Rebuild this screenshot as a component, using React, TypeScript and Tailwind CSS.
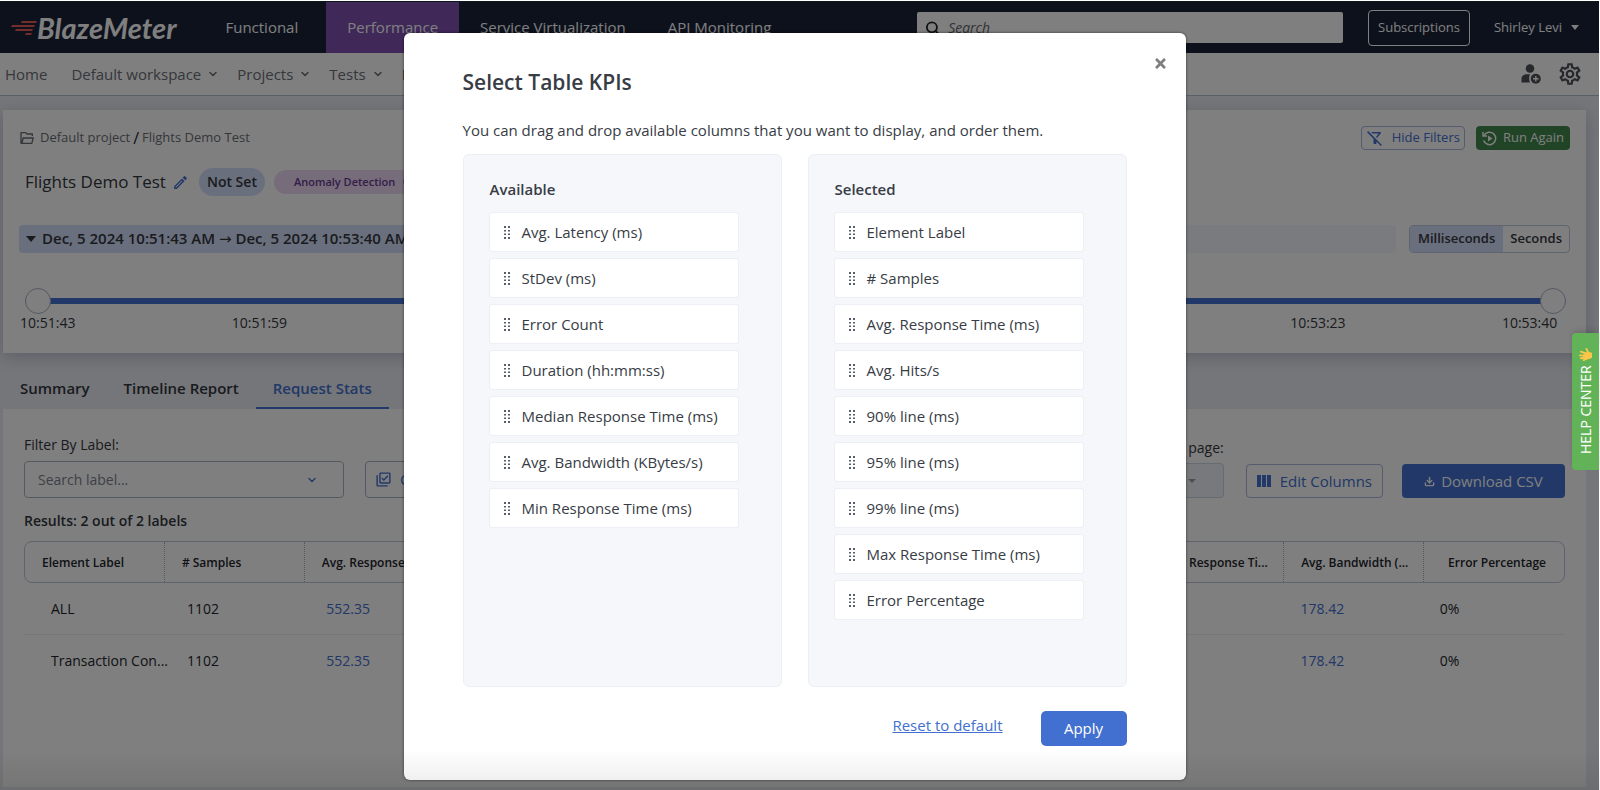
import { useState } from "react";
import { ChevronDown, Info, Search } from "lucide-react";
import { FaTimes } from "react-icons/fa";
import { FiDownload } from "react-icons/fi";
import {
  MdOutlineFilterAltOff,
  MdOutlineLibraryAddCheck,
  MdOutlineModeEdit,
  MdOutlineSettings,
} from "react-icons/md";
import { RiFolderOpenLine } from "react-icons/ri";

const PRODUCTS = [
  "Functional",
  "Performance",
  "Service Virtualization",
  "API Monitoring",
];

const MENUS = ["Default workspace", "Projects", "Tests", "Reports"];

// empty ticks keep the spacing of the scale
const TICKS = ["10:51:43", "10:51:59", "", "", "", "", "10:53:23", "10:53:40"];

const TABS = ["Summary", "Timeline Report", "Request Stats"];

const HEADERS = [
  "Element Label",
  "# Samples",
  "Avg. Response ...",
  "",
  "",
  "",
  "",
  "",
  "Max Response Ti...",
  "Avg. Bandwidth (...",
  "Error Percentage",
];

const ROWS = [
  ["ALL", "1102", "552.35", "", "", "", "", "", "", "178.42", "0%"],
  ["Transaction Con...", "1102", "552.35", "", "", "", "", "", "", "178.42", "0%"],
];

const AVAILABLE = [
  "Avg. Latency (ms)",
  "StDev (ms)",
  "Error Count",
  "Duration (hh:mm:ss)",
  "Median Response Time (ms)",
  "Avg. Bandwidth (KBytes/s)",
  "Min Response Time (ms)",
];

const SELECTED = [
  "Element Label",
  "# Samples",
  "Avg. Response Time (ms)",
  "Avg. Hits/s",
  "90% line (ms)",
  "95% line (ms)",
  "99% line (ms)",
  "Max Response Time (ms)",
  "Error Percentage",
];

function Logo() {
  return (
    <a href="#" className="flex items-center pl-[11px]">
      <svg width="26" height="16" viewBox="0 0 26 16" fill="#e65a54" aria-hidden="true">
        <path d="M11 1h15l-1 2H10zM1 5h23l-1 2H0zM5 9h17l-1 2H4zM15 13h6l-1 2h-6z" />
      </svg>
      <span className="font-[Lato] text-[29px] leading-8 font-bold text-white italic">
        BlazeMeter
      </span>
    </a>
  );
}

function TopBar() {
  return (
    <header className="flex h-[52px] items-center border-t border-[#14302f] bg-[#1a2238] text-white">
      <Logo />
      <nav className="ml-7 flex h-full shrink-0">
        {PRODUCTS.map((name) => (
          <a
            key={name}
            href="#"
            className={`flex h-full items-center px-[21px] text-[15px] ${
              name === "Performance" ? "ml-[7px] bg-[#8050b2]" : ""
            }`}
          >
            {name}
          </a>
        ))}
      </nav>
      <div className="ml-auto flex items-center">
        <label className="flex h-[31px] w-[426px] items-center gap-2 rounded-xs bg-white px-2 text-[#22252b]">
          <Search size={16} strokeWidth={3} />
          <input
            type="text"
            placeholder="Search"
            aria-label="Search"
            className="w-full text-sm italic placeholder:text-[#63666d]"
          />
        </label>
        <button className="ml-[25px] h-9 rounded-sm border border-white px-[9px] text-[13px]">
          Subscriptions
        </button>
        <button className="ml-6 flex items-center gap-[9px] pr-5 text-[13px]">
          Shirley Levi
          <svg width="8" height="5" viewBox="0 0 8 5" fill="currentColor">
            <path d="M0 0h8L4 5z" />
          </svg>
        </button>
      </div>
    </header>
  );
}

function InviteIcon() {
  return (
    <svg width="20" height="20" viewBox="0 0 20 20" fill="currentColor">
      <circle cx="9" cy="4.500" r="4.300" />
      <path d="M.5 18.500V15c0-3 2-4.800 5-4.800h3.500c-1.200 2.500-1.200 5.500 0 8.300z" />
      <circle cx="14.800" cy="14.800" r="5" />
      <path d="M14.100 12h1.400v2.100h2.100v1.400h-2.100v2.100h-1.400v-2.100H12v-1.400h2.100z" fill="#fff" />
    </svg>
  );
}

function MenuBar() {
  return (
    <div className="flex h-[43px] items-center border-b border-[#b4c0d6] bg-white text-[15px] text-[#6b6e75]">
      <a href="#" className="mr-6 pl-[5px]">
        Home
      </a>
      {MENUS.map((name) => (
        <button key={name} className="mr-[18px] flex items-center gap-1.5">
          {name}
          <ChevronDown size={12} strokeWidth={3} />
        </button>
      ))}
      <div className="ml-auto flex items-center gap-4 pr-4 text-[#4d5058]">
        <button aria-label="Invite user">
          <InviteIcon />
        </button>
        <button aria-label="Settings">
          <MdOutlineSettings size={26} />
        </button>
      </div>
    </div>
  );
}

function RerunIcon() {
  return (
    <svg width="15" height="15" viewBox="0 0 15 15" fill="none" stroke="currentColor" strokeWidth="1.500">
      <path d="M2 4.500A6.200 6.200 0 1 1 1.600 9.500" />
      <path d="M1 1v4h4" />
      <path d="M6 4.500v6l4.500-3z" fill="currentColor" stroke="none" />
    </svg>
  );
}

const RANGE_CLASS =
  "pointer-events-none absolute inset-0 h-[26px] w-full appearance-none bg-transparent [&::-webkit-slider-thumb]:h-[26px] [&::-webkit-slider-thumb]:w-[26px] [&::-webkit-slider-thumb]:appearance-none [&::-webkit-slider-thumb]:rounded-full [&::-webkit-slider-thumb]:border [&::-webkit-slider-thumb]:border-[#a9b3c6] [&::-webkit-slider-thumb]:bg-white [&::-webkit-slider-thumb]:pointer-events-auto";

function TimeRange() {
  return (
    <div className="mt-[35px] pr-1 pl-1.5">
      <div className="relative flex h-[26px] items-center">
        <div className="h-1.5 w-full rounded-full bg-[#4270d0]" />
        <input type="range" min={0} max={117} defaultValue={0} aria-label="From" className={RANGE_CLASS} />
        <input type="range" min={0} max={117} defaultValue={117} aria-label="To" className={RANGE_CLASS} />
      </div>
    </div>
  );
}

function ReportHeader() {
  const [unit, setUnit] = useState("Milliseconds");

  return (
    <section className="mt-3.5 bg-white px-4 pt-4 pb-[21px] text-[#33363d] shadow-[0_4px_16px_rgba(60,70,110,0.28)]">
      <div className="flex h-6 items-center text-[13px] text-[#6b6e75]">
        <RiFolderOpenLine size={16} className="mr-[5px]" />
        <a href="#">Default project</a>
        <span className="mx-[3px] text-base text-[#22252b]">/</span>
        <a href="#">Flights Demo Test</a>
        <button className="ml-auto flex h-6 items-center gap-2 rounded border border-[#a9b8dc] px-1 text-[#4270d0]">
          <MdOutlineFilterAltOff size={18} />
          Hide Filters
        </button>
        <button className="ml-[11px] flex h-6 items-center gap-1.5 rounded bg-[#43894e] px-1.5 text-white">
          <RerunIcon />
          Run Again
        </button>
      </div>
      <div className="mt-[18px] flex items-center pl-1.5">
        <h1 className="text-[17px] leading-7">Flights Demo Test</h1>
        <button aria-label="Rename test" className="ml-1.5 text-[#4270d0]">
          <MdOutlineModeEdit size={17} />
        </button>
        <span className="ml-2.5 rounded-full bg-[#d3dff9] px-2 text-sm leading-7 font-semibold">
          Not Set
        </span>
        <span className="ml-[9px] flex h-6 items-center gap-2 rounded-full bg-[#ecd9f5] px-5 text-[11px] font-semibold text-[#693b92]">
          Anomaly Detection
          <Info size={14} className="text-[#22252b]" />
        </span>
      </div>
      <div className="mt-[29px] flex h-7 items-stretch gap-[13px] font-semibold">
        <div className="flex flex-1 rounded bg-[#f3f6fc]">
          <button className="flex items-center gap-1.5 rounded bg-[#d3dff9] px-[7px] text-[15px]">
            <svg width="10" height="6" viewBox="0 0 10 6" fill="currentColor">
              <path d="M0 0h10L5 6z" />
            </svg>
            <span>
              Dec, 5 2024 10:51:43 AM{" "}
              <span className="font-['DejaVu_Sans'] font-normal">→</span> Dec, 5 2024 10:53:40 AM
            </span>
          </button>
        </div>
        <div className="flex rounded border border-[#bcc8e0] text-[13px]">
          {["Milliseconds", "Seconds"].map((name) => (
            <button
              key={name}
              onClick={() => setUnit(name)}
              className={unit === name ? "bg-[#d3dff9] px-2" : "px-[7px]"}
            >
              {name}
            </button>
          ))}
        </div>
      </div>
      <TimeRange />
      <div className="flex justify-between pr-[13px] pl-px text-sm leading-[18px]">
        {TICKS.map((tick, i) => (
          <span key={i} className="w-[55px]">
            {tick}
          </span>
        ))}
      </div>
    </section>
  );
}

function StatsTable() {
  return (
    <table className="mt-2.5 block w-full text-left text-sm text-[#22252b]">
      <thead className="block rounded-lg border border-[#bcc6dc]">
        <tr className="grid h-10 grid-cols-11 items-stretch text-xs">
          {HEADERS.map((name, i) => (
            <th
              key={i}
              className="flex items-center overflow-hidden border-r border-dotted border-[#a9b3c6] pt-0.5 pl-[17px] font-semibold whitespace-nowrap last:border-r-0 last:pl-6"
            >
              {name}
            </th>
          ))}
        </tr>
      </thead>
      <tbody className="block">
        {ROWS.map((row) => (
          <tr
            key={row[0]}
            className="grid h-[52px] grid-cols-[136px_repeat(9,minmax(0,10fr))_minmax(0,9fr)] items-center border-b border-[#eceef2] pl-[27px] last:border-b-0"
          >
            {row.map((value, i) => (
              <td key={i} className="whitespace-nowrap">
                {value.includes(".") && i > 0 ? (
                  <a href="#" className="text-[#4270d0]">
                    {value}
                  </a>
                ) : (
                  value
                )}
              </td>
            ))}
          </tr>
        ))}
      </tbody>
    </table>
  );
}

function RequestStats() {
  return (
    <section className="mb-[3px] flex-1 bg-white px-[21px] pt-[25px] text-[#33363d]">
      <div className="flex items-end">
        <div>
          <label htmlFor="label-filter" className="block text-sm leading-[22px]">
            Filter By Label:
          </label>
          <div className="mt-[5px] flex h-[37px] w-[320px] items-center rounded-sm border border-[#a9b3c6] pr-[25px] pl-[13px]">
            <input
              id="label-filter"
              type="text"
              placeholder="Search label..."
              className="w-full text-sm placeholder:text-[#7c818c]"
            />
            <ChevronDown size={12} strokeWidth={2.5} className="shrink-0 text-[#4270d0]" />
          </div>
        </div>
        <button className="ml-[21px] flex h-[37px] items-center gap-2 rounded-sm border border-[#a9b3c6] px-[9px] text-[15px] text-[#4270d0]">
          <MdOutlineLibraryAddCheck size={17} />
          Compare
        </button>
        <div className="ml-auto">
          <label htmlFor="page-size" className="block text-right text-sm leading-[22px]">
            Results per page:
          </label>
          <div className="relative mt-1">
            <select
              id="page-size"
              disabled
              className="h-[35px] w-[120px] appearance-none rounded-sm border border-[#ccd5e6] bg-[#f0f3f9] pl-3 text-sm"
            >
              <option>20</option>
            </select>
            <svg
              width="8"
              height="4"
              viewBox="0 0 8 4"
              fill="#9a9da6"
              className="pointer-events-none absolute top-4 right-7"
            >
              <path d="M0 0h8L4 4z" />
            </svg>
          </div>
        </div>
        <button className="ml-[22px] flex h-[34px] items-center gap-[9px] rounded-sm border border-[#a9b8dc] px-2.5 text-[15px] text-[#4270d0]">
          <svg width="14" height="12" viewBox="0 0 14 12" fill="currentColor">
            <path d="M0 0h4v12H0zM5 0h4v12H5zM10 0h4v12h-4z" />
          </svg>
          Edit Columns
        </button>
        <button className="ml-[19px] flex h-[34px] w-[163px] items-center justify-center gap-1.5 rounded-sm bg-[#4270d0] text-[15px] text-white">
          <FiDownload size={11} strokeWidth={3} />
          Download CSV
        </button>
      </div>
      <p className="mt-[13px] text-sm leading-5 font-semibold">Results: 2 out of 2 labels</p>
      <StatsTable />
    </section>
  );
}

function DragHandle() {
  return (
    <svg width="6" height="13" viewBox="0 0 6 13" fill="#565d6b" aria-hidden="true">
      <path d="M0 0h2v2H0zM4 0h2v2H4zM0 4h2v1.500H0zM4 4h2v1.500H4zM0 7.500h2V9H0zM4 7.500h2V9H4zM0 11h2v2H0zM4 11h2v2H4z" />
    </svg>
  );
}

function KpiList({ title, items }: { title: string; items: string[] }) {
  return (
    <div className="min-h-[533px] flex-1 rounded-md border border-[#eceff5] bg-[#f5f7fb] px-[26px] pt-[22px]">
      <h3 className="text-[15px] leading-6 font-semibold">{title}</h3>
      <ul className="mt-3 flex w-[248px] flex-col gap-2">
        {items.map((item) => (
          <li
            key={item}
            draggable
            className="flex h-[38px] items-center gap-3 rounded-xs bg-white pl-3.5 text-[15px] shadow-[0_0_0_1px_#eceff5]"
          >
            <DragHandle />
            {item}
          </li>
        ))}
      </ul>
    </div>
  );
}

function KpiModal() {
  return (
    <div className="absolute inset-x-0 top-px right-px bottom-0 flex items-start justify-center bg-black/50 pt-8 pr-2.5">
      <div
        role="dialog"
        aria-labelledby="kpi-title"
        className="relative w-[782px] rounded-md bg-white px-[59px] pt-[33px] pb-[34px] text-[#383c45] shadow-[0_0_3px_rgba(0,0,0,0.6)]"
      >
        <button aria-label="Close" className="absolute top-[23px] right-[18px] text-[#7f7f7f]">
          <FaTimes size={15} />
        </button>
        <h2 id="kpi-title" className="text-[21px] leading-8 font-semibold">
          Select Table KPIs
        </h2>
        <p className="mt-5 text-[15px] leading-6">
          You can drag and drop available columns that you want to display, and order them.
        </p>
        <div className="mt-3 flex gap-[26px]">
          <KpiList title="Available" items={AVAILABLE} />
          <KpiList title="Selected" items={SELECTED} />
        </div>
        <div className="mt-6 flex h-[35px] items-center justify-end gap-[38px]">
          <button className="pb-1.5 text-[15px] text-[#4270d0] underline">Reset to default</button>
          <button className="h-[35px] w-[86px] rounded-[5px] bg-[#4270d0] text-[15px] text-white">
            Apply
          </button>
        </div>
      </div>
    </div>
  );
}

function HelpCenter() {
  return (
    <button className="absolute top-[333px] right-px flex h-[137px] w-[27px] rotate-180 items-center justify-start gap-1 rounded-r-sm bg-[#62b358] pt-4 text-sm text-white shadow-md [writing-mode:vertical-rl]">
      HELP CENTER
      <svg
        width="13"
        height="13"
        viewBox="0 0 14 14"
        fill="none"
        stroke="#fcc64a"
        strokeLinecap="round"
        className="rotate-180"
      >
        <path d="M8 5h3a3 3 0 0 1 1 6l-4 1-3-2z" fill="#fcc64a" />
        <path d="M8 6 2 4M8 8H1M8 10l-6 1M9 11l-4 2M10 5 8 1" strokeWidth="2" />
      </svg>
    </button>
  );
}

export default function App() {
  return (
    <div className="relative flex min-h-screen flex-col overflow-hidden bg-white pt-px pr-px font-['Open_Sans',sans-serif]">
      <TopBar />
      <MenuBar />
      <main className="flex flex-1 flex-col bg-[#eaedf3] pr-[13px] pl-[3px]">
        <ReportHeader />
        <nav className="flex h-14">
          {TABS.map((tab) => (
            <a
              key={tab}
              href="#"
              className={`flex items-end border-b-2 px-[17px] pb-2 text-[15px] font-semibold ${
                tab === "Request Stats"
                  ? "border-[#4270d0] text-[#4270d0]"
                  : "border-transparent text-[#33363d]"
              }`}
            >
              {tab}
            </a>
          ))}
        </nav>
        <RequestStats />
      </main>
      <KpiModal />
      <HelpCenter />
      <div className="pointer-events-none absolute inset-x-0 bottom-0 h-10 bg-linear-to-t from-black/8 to-transparent" />
    </div>
  );
}
